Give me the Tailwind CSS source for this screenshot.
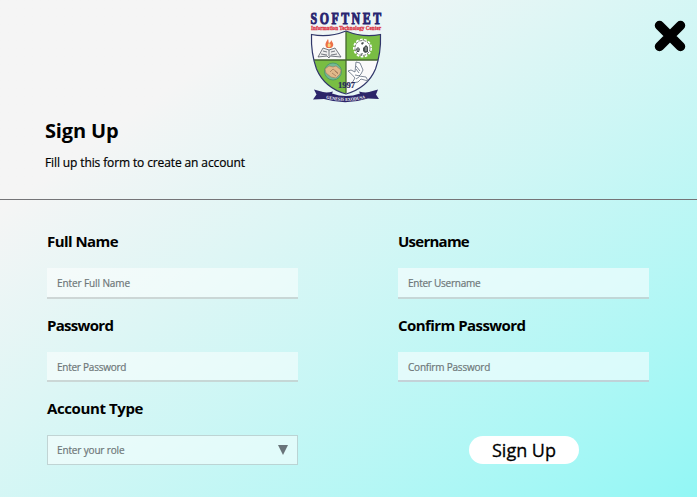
<!DOCTYPE html>
<html lang="en">
<head>
<meta charset="utf-8">
<title>Sign Up</title>
<script src="https://cdn.jsdelivr.net/npm/@tailwindcss/browser@4"></script>
</head>
<body class="w-[697px] h-[497px] overflow-hidden bg-linear-to-br from-[#f5f5f5] from-21% to-[#92f7f5] to-100% text-black font-['Segoe_UI','Open_Sans','Noto_Sans',sans-serif]">
<header class="relative h-[200px] border-b border-[#747477] pt-3 pl-[45px]">
  <svg class="ml-[263px] w-[76px] h-[92px] overflow-visible" viewBox="308 12 76 92" role="img" aria-label="Softnet">
    <text transform="translate(310.500 24.300) scale(.72 1)" x="0" y="0" font-family="Liberation Serif, serif" font-weight="bold" font-size="16.500" fill="#28246f" stroke="#28246f" stroke-width="1" textLength="98">SOFTNET</text>
    <text x="311" y="29.500" font-family="Liberation Serif, serif" font-weight="bold" font-size="5.500" fill="#dc3545" stroke="#dc3545" stroke-width=".3" textLength="70" lengthAdjust="spacingAndGlyphs">Information Technology Center</text>
    <clipPath id="shield"><path d="M311.500 34.500Q329 38 346 31Q363 38 380.500 34.500C381 48 378 62 375.500 69C370 82 360 90 346 94C332 90 322 82 316.500 69C314 62 311 48 311.500 34.500Z"/></clipPath>
    <g clip-path="url(#shield)">
      <path fill="#fafafa" d="M308 30h76v66h-76z"/>
      <path fill="#79bd43" d="M346 30h38v30h-38zM308 60h38v36h-38z"/>
      <path stroke="#45672f" stroke-width="1.300" d="M346 31v62M311 60h70"/>
    </g>
    <path fill="none" stroke="#31376a" stroke-width="1.200" d="M311.500 34.500Q329 38 346 31Q363 38 380.500 34.500C381 48 378 62 375.500 69C370 82 360 90 346 94C332 90 322 82 316.500 69C314 62 311 48 311.500 34.500Z"/>
    <path fill="#ed7048" d="M327 48c-3-3-1-6 1-9 1 2 0 3 1 4 2-1 2-2 2-3 3 4 3 6 0 8z"/>
    <path fill="#f8d277" d="M328 47q-1-3 1-4 3 2 1 4z"/>
    <path fill="#eee" stroke="#555a64" stroke-width=".8" d="M318 57l5-9 6 2 6-2 6 9-11-1-1 2-2-2zM329 50v6M321 54l6 1m4 0 6-1M323 51l4 1m4 0 4-1"/>
    <circle cx="362.500" cy="48" r="8" fill="#fafafa" stroke="#fff" stroke-width="3" stroke-dasharray="2.500 1.400"/>
    <circle cx="362.500" cy="48" r="7.500" fill="#fff" stroke="#59615b" stroke-width=".8" stroke-dasharray="3 1"/>
    <path fill="#47504e" d="M361 43l2-1 1 1-2 2zm-5 6 2-2 2 2-1 3h-2zm7-1 3-3 2 2v5l-3 1-2-2zm-3 6 3-1-1 2z"/>
    <path stroke="#ddd" stroke-width=".7" d="M358 48v3m8-4v4"/>
    <circle cx="333" cy="71.500" r="8.500" fill="#72b894" stroke="#448c68" stroke-width=".7"/>
    <path fill="#e1b889" stroke="#a17758" stroke-width=".6" d="M325 69l4-3 4 1 3-1 5 4-1 4-4 4-5-1-5-4z"/>
    <path fill="none" stroke="#9b7053" stroke-width=".7" d="M330 72l3-3 5 4m-6 0 4 3m-1-5 3 3"/>
    <path fill="#fff" stroke="#5e6b7e" stroke-width=".8" d="M348 71l3-1 4 2 1-10 4 1 3 7q-2 5-4 6l7 1 2 4-7-2-3 3-6 1 3-5q-3-4-7-7zM356 66l4 5m-4-2 3 4m-4 2 5 1m-4 3 3-2"/>
    <text x="338" y="88" font-family="Liberation Serif, serif" font-weight="bold" font-size="7.500" fill="#25275b" stroke="#25275b" stroke-width=".2" textLength="17" lengthAdjust="spacingAndGlyphs">1997</text>
    <path fill="#2c2569" d="M314 89.500l9 2.500q4 1 10-.5l-1 2q14 5 28 0l-1-2q6 1.500 10 .5l9-2.500-2 5 3 4.500-11-.5Q346 105.500 324 99l-11 .5 3.500-5z"/>
    <path id="motto" fill="none" d="M326 98.600Q346 103.500 366 98.200"/>
    <text font-family="Liberation Serif, serif" font-weight="bold" font-size="4.600" fill="#fff"><textPath href="#motto" textLength="40" lengthAdjust="spacingAndGlyphs">GENESIS EXODUSA</textPath></text>
  </svg>
  <button class="absolute right-[11px] top-5 h-8 w-8" aria-label="Close">
    <svg class="block h-8 w-8" viewBox="0 0 32 32"><path d="M5.500 5.500l21 21m0-21l-21 21" stroke="#000" stroke-width="9.500" stroke-linecap="round"/></svg>
  </button>
  <h1 class="mt-[13px] h-7 leading-7 text-[20px] tracking-[-0.15px] font-bold whitespace-nowrap">Sign Up</h1>
  <p class="mt-[9px] h-[18px] leading-[18px] text-[12px] tracking-[-0.12px] [-webkit-text-stroke:0.2px] whitespace-nowrap">Fill up this form to create an account</p>
</header>
<main class="grid grid-cols-[251px_251px] gap-x-[100px] pl-[47px] pt-[31px] text-[15px] tracking-[-0.55px] font-bold">
  <label class="flex h-[84px] flex-col whitespace-nowrap"><span class="h-[37px] leading-[20px]">Full Name</span><input class="h-[31px] w-[251px] border-b-2 border-[#7c8585]/30 bg-white/50 px-[10px] text-[10px] tracking-[-0.1px] font-medium [-webkit-text-stroke:0.2px] placeholder:text-[#6e7779]" placeholder="Enter Full Name"></label>
  <label class="flex h-[84px] flex-col whitespace-nowrap"><span class="h-[37px] leading-[20px] tracking-[-0.75px]">Username</span><input class="h-[31px] w-[251px] border-b-2 border-[#7c8585]/30 bg-white/55 px-[10px] text-[10px] tracking-[-0.25px] font-medium [-webkit-text-stroke:0.2px] placeholder:text-[#6e7779]" placeholder="Enter Username"></label>
  <label class="flex h-[83px] flex-col whitespace-nowrap"><span class="h-[37px] leading-[20px] tracking-[-0.7px]">Password</span><input class="h-[30px] w-[251px] border-b-2 border-[#7c8585]/30 bg-white/50 px-[10px] pt-[2px] text-[10px] tracking-[-0.25px] font-medium [-webkit-text-stroke:0.2px] placeholder:text-[#6e7779]" placeholder="Enter Password"></label>
  <label class="flex h-[83px] flex-col whitespace-nowrap"><span class="h-[37px] leading-[20px]">Confirm Password</span><input class="h-[30px] w-[251px] border-b-2 border-[#9f9fae]/45 bg-white/55 px-[10px] pt-[2px] text-[10px] tracking-[-0.2px] font-medium [-webkit-text-stroke:0.2px] placeholder:text-[#6e7779]" placeholder="Confirm Password"></label>
  <div class="flex flex-col whitespace-nowrap"><span class="h-[37px] leading-[20px] tracking-[-0.4px]">Account Type</span><div class="flex h-[30px] w-[251px] items-center justify-between border border-[#819a9b]/40 bg-white/50 pl-[9px] pr-[9px] text-[10px] tracking-[-0.15px] font-medium [-webkit-text-stroke:0.2px] text-[#6e7779]"><span>Enter your role</span><svg class="h-[10px] w-[10px]" viewBox="0 0 10 10"><path fill="#69747a" d="M0 0h10L5 10z"/></svg></div></div>
  <div class="pl-[71px] pt-[38px]"><button class="flex h-7 w-[110px] items-center justify-center rounded-full bg-white text-[18px] tracking-normal font-medium [-webkit-text-stroke:0.3px] whitespace-nowrap">Sign Up</button></div>
</main>
</body>
</html>
